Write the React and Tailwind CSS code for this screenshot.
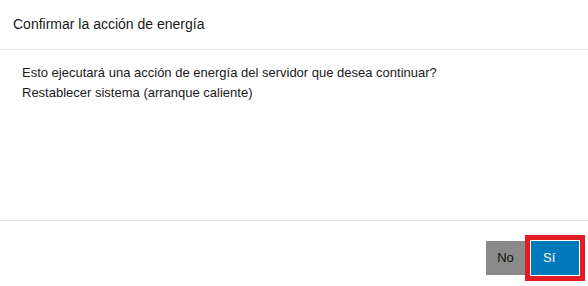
export default function App() {
  return (
    <div className="w-[588px] h-[286px] bg-white flex flex-col text-[#1a1a1a]" style={{ fontFamily: '"Liberation Sans", Arial, sans-serif' }}>
      <div className="h-[50px] border-b border-[#e5e5e5] flex items-center pl-[13px] text-[14px]">
        Confirmar la acción de energía
      </div>
      <div className="h-[171px] border-b border-[#e5e5e5] pl-[22px] pt-[13px] text-[13px] leading-[20px]">
        <div>Esto ejecutará una acción de energía del servidor que desea continuar?</div>
        <div>Restablecer sistema (arranque caliente)</div>
      </div>
      <div className="flex-1 flex justify-end items-start pt-[20px] pr-[9px] gap-[6px]">
        <button className="w-[39px] h-[34px] bg-[#8a8a8a] text-[13px] text-[#111]">No</button>
        <button className="w-[48px] h-[34px] bg-[#0079b9] text-[13px] text-white text-left pl-[12px] outline-[5px] outline-solid outline-[#e31c24] outline-offset-[1px] ring-1 ring-white">Sí</button>
      </div>
    </div>
  )
}
